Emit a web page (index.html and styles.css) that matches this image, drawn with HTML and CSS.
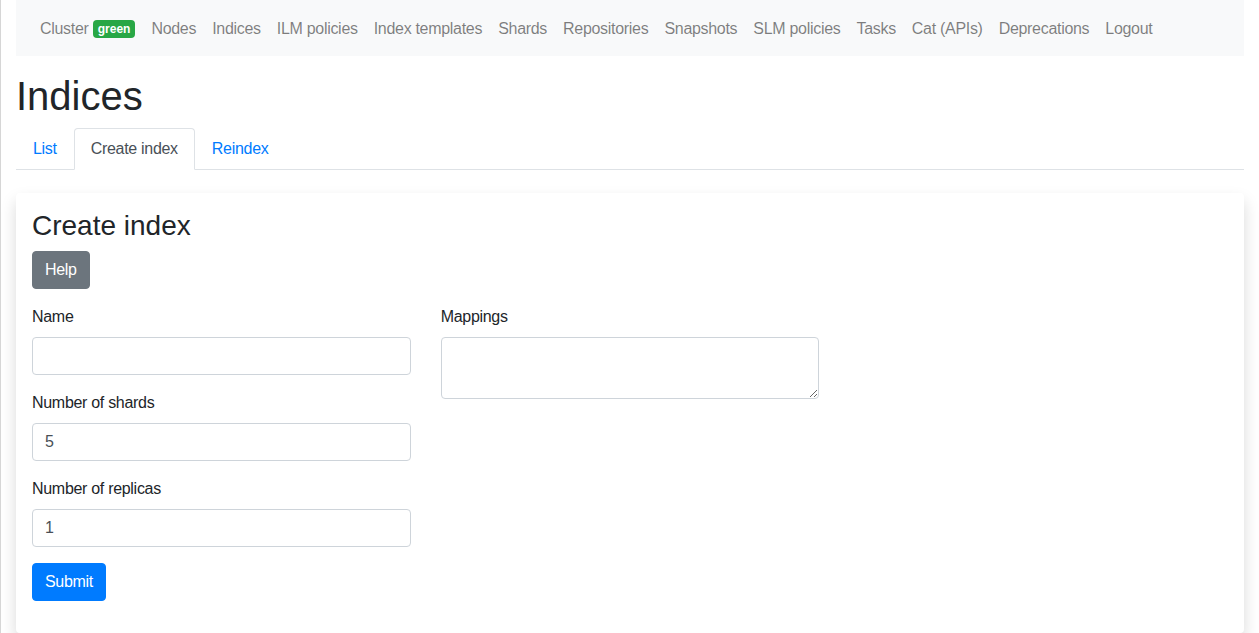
FILE: index.html
```html
<!DOCTYPE html>
<html lang="en">
<head>
<meta charset="utf-8">
<title>Indices</title>
<link rel="stylesheet" href="styles.css">
</head>
<body>
<div class="page">
  <nav class="navbar">
    <ul class="navbar-nav">
      <li><a class="nav-link" href="#">Cluster <span class="badge">green</span></a></li>
      <li><a class="nav-link" href="#">Nodes</a></li>
      <li><a class="nav-link" href="#">Indices</a></li>
      <li><a class="nav-link" href="#">ILM policies</a></li>
      <li><a class="nav-link" href="#">Index templates</a></li>
      <li><a class="nav-link" href="#">Shards</a></li>
      <li><a class="nav-link" href="#">Repositories</a></li>
      <li><a class="nav-link" href="#">Snapshots</a></li>
      <li><a class="nav-link" href="#">SLM policies</a></li>
      <li><a class="nav-link" href="#">Tasks</a></li>
      <li><a class="nav-link" href="#">Cat (APIs)</a></li>
      <li><a class="nav-link" href="#">Deprecations</a></li>
      <li><a class="nav-link" href="#">Logout</a></li>
    </ul>
  </nav>

  <h1 class="page-title">Indices</h1>

  <ul class="nav-tabs">
    <li><a class="tab-link" href="#">List</a></li>
    <li><a class="tab-link active" href="#">Create index</a></li>
    <li><a class="tab-link" href="#">Reindex</a></li>
  </ul>

  <div class="card">
    <h3 class="card-title">Create index</h3>
    <button class="btn btn-secondary help-btn" type="button">Help</button>
    <form class="row">
      <div class="col">
        <div class="form-group">
          <label>Name</label>
          <input class="form-control" type="text" value="">
        </div>
        <div class="form-group">
          <label>Number of shards</label>
          <input class="form-control" type="text" value="5">
        </div>
        <div class="form-group">
          <label>Number of replicas</label>
          <input class="form-control" type="text" value="1">
        </div>
        <div class="form-group">
          <button class="btn btn-primary" type="submit">Submit</button>
        </div>
      </div>
      <div class="col">
        <div class="form-group">
          <label>Mappings</label>
          <textarea class="form-control textarea" rows="2"></textarea>
        </div>
      </div>
    </form>
  </div>
</div>
</body>
</html>
```

FILE: styles.css
```css
* { box-sizing: border-box; }

html, body {
  margin: 0;
  padding: 0;
}

body {
  font-family: "Liberation Sans", Arial, sans-serif;
  font-size: 16px;
  line-height: 1.5;
  letter-spacing: -0.3px;
  color: #212529;
  background: #fff;
  border-left: 1px solid #d6d6d6;
  min-height: 633px;
}

.page {
  padding: 0 15px;
}

.navbar {
  background: #f8f9fa;
  padding: 9px 16px 7px;
}

.navbar-nav {
  list-style: none;
  margin: 0;
  padding: 0;
  display: flex;
}

.nav-link {
  display: block;
  padding: 8px 8px;
  color: rgba(0, 0, 0, .5);
  text-decoration: none;
  white-space: nowrap;
}

.badge {
  display: inline-block;
  background: #28a745;
  color: #fff;
  font-size: 12px;
  font-weight: 700;
  line-height: 1;
  letter-spacing: 0;
  padding: 3px 5px;
  border-radius: 4px;
  vertical-align: 1px;
}

.page-title {
  font-size: 40px;
  font-weight: 500;
  line-height: 1.2;
  letter-spacing: 0;
  margin: 16px 0 8px;
}

.nav-tabs {
  list-style: none;
  margin: 0 0 23px;
  padding: 0;
  display: flex;
  border-bottom: 1px solid #dee2e6;
}

.tab-link {
  display: block;
  padding: 8px 16px;
  margin-bottom: -1px;
  border: 1px solid transparent;
  border-top-left-radius: 4px;
  border-top-right-radius: 4px;
  color: #007bff;
  text-decoration: none;
}

.tab-link.active {
  color: #495057;
  background: #fff;
  border-color: #dee2e6 #dee2e6 #fff;
}

.card {
  background: #fff;
  border-radius: 4px;
  box-shadow: 0 8px 16px rgba(0, 0, 0, .15);
  padding: 16px;
}

.card-title {
  font-size: 28px;
  font-weight: 500;
  line-height: 1.2;
  letter-spacing: 0;
  margin: 0 0 8px;
}

.btn {
  display: inline-block;
  font-family: inherit;
  font-size: 16px;
  line-height: 1.5;
  letter-spacing: -0.3px;
  padding: 6px 12px;
  border: 1px solid transparent;
  border-radius: 4px;
  color: #fff;
  cursor: pointer;
}

.btn-secondary {
  background: #6c757d;
  border-color: #6c757d;
}

.btn-primary {
  background: #007bff;
  border-color: #007bff;
}

.help-btn {
  margin-bottom: 16px;
}

.row {
  display: flex;
  margin: 0 -15px;
}

.col {
  width: 33.3333%;
  padding: 0 15px;
}

.form-group {
  margin-bottom: 16px;
}

label {
  display: inline-block;
  margin-bottom: 8px;
}

.form-control {
  display: block;
  width: 100%;
  height: 38px;
  padding: 6px 12px;
  font-family: inherit;
  font-size: 16px;
  line-height: 1.5;
  color: #495057;
  background: #fff;
  border: 1px solid #ced4da;
  border-radius: 4px;
}

.textarea {
  height: 62px;
  resize: vertical;
}
```
